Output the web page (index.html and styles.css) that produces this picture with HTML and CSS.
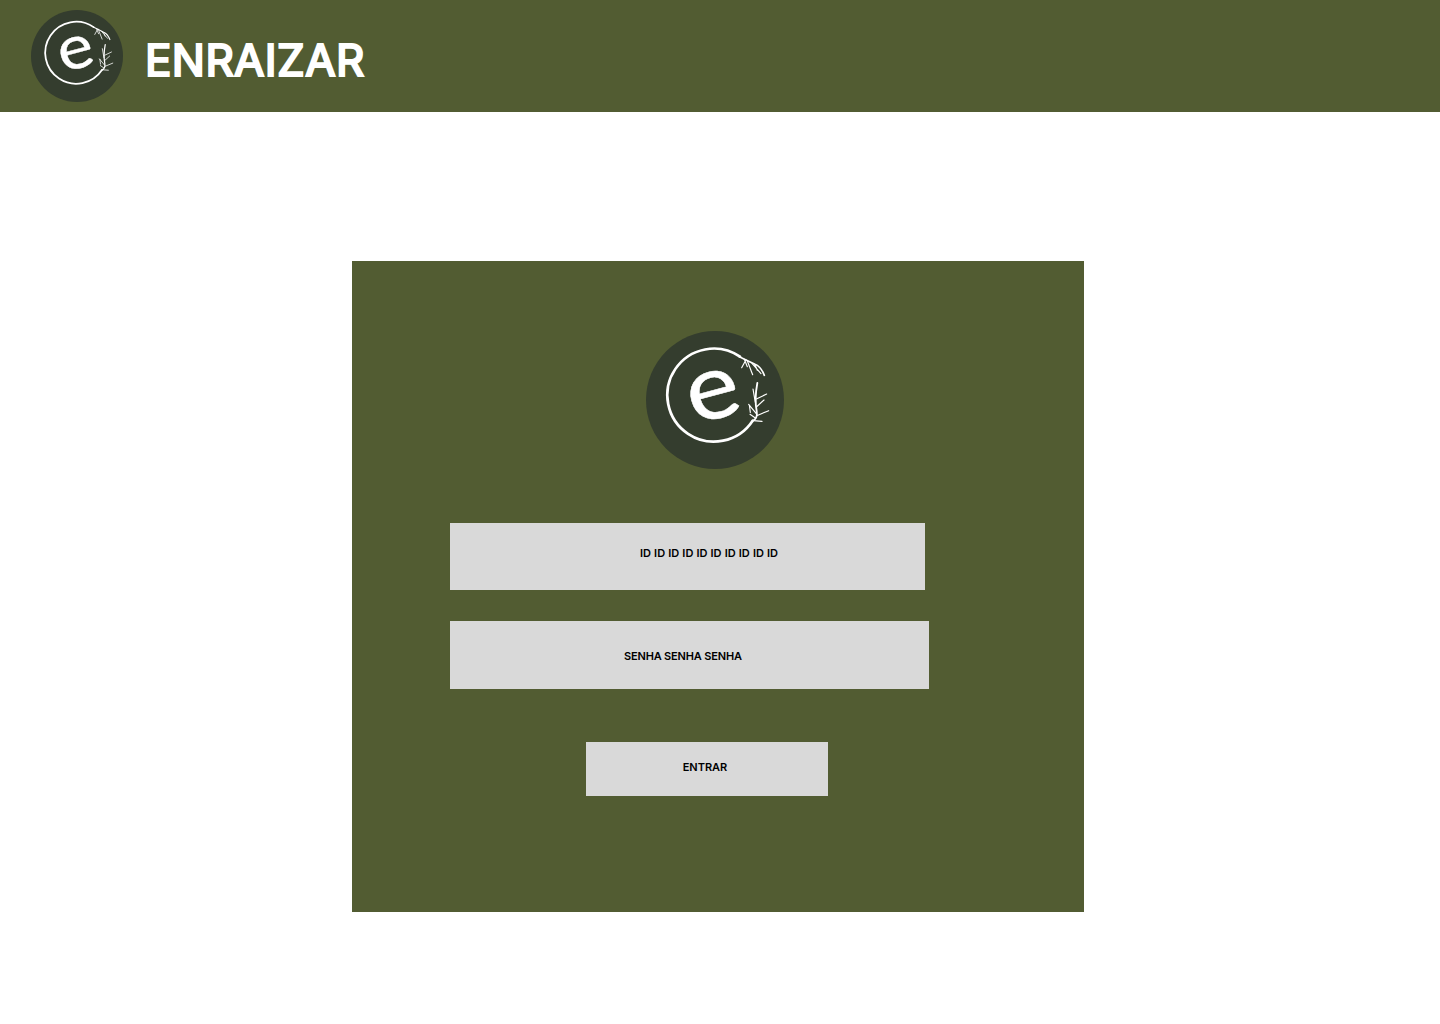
FILE: index.html
```html
<!DOCTYPE html>
<html lang="pt-BR">
<head>
<meta charset="utf-8">
<title>Enraizar</title>
<link rel="stylesheet" href="styles.css">
</head>
<body>
<header class="topbar">
  <svg class="logo logo-small" viewBox="18 18 414 414">
    <circle cx="225" cy="225" r="207" fill="#343d2e"/>
    <path d="M300 95A139.500 139.500 0 1 0 338 287" fill="none" stroke="#fff" stroke-width="8" stroke-linecap="round"/>
    <text transform="translate(161 299) rotate(-15) scale(1.1 1)" class="logo-e">e</text>
    <g fill="none" stroke="#fff" stroke-linecap="round" stroke-linejoin="round">
      <path stroke-width="5" d="M298 95Q325 108 345 118Q362 124 373 151"/>
      <path stroke-width="3.500" d="M318 104L305 128M322 108L338 149M336 115L363 146M345 119L352 136M313 103L322 125"/>
      <path stroke-width="5.500" d="M336 289Q354 282 350 258Q343 222 352 174"/>
      <path stroke-width="3.500" d="M349 266L326 238M346 232L339 192M349 222L380 207M350 272L386 257M340 287L366 289M349 246L372 225M328 240L331 262M345 278L330 268"/>
    </g>
  </svg>
  <span class="brand">ENRAIZAR</span>
</header>
<main class="page">
  <form class="card">
    <svg class="logo logo-large" viewBox="18 18 414 414">
      <circle cx="225" cy="225" r="207" fill="#343d2e"/>
      <path d="M300 95A139.500 139.500 0 1 0 338 287" fill="none" stroke="#fff" stroke-width="8" stroke-linecap="round"/>
      <text transform="translate(161 299) rotate(-15) scale(1.1 1)" class="logo-e">e</text>
      <g fill="none" stroke="#fff" stroke-linecap="round" stroke-linejoin="round">
        <path stroke-width="5" d="M298 95Q325 108 345 118Q362 124 373 151"/>
        <path stroke-width="3.500" d="M318 104L305 128M322 108L338 149M336 115L363 146M345 119L352 136M313 103L322 125"/>
        <path stroke-width="5.500" d="M336 289Q354 282 350 258Q343 222 352 174"/>
        <path stroke-width="3.500" d="M349 266L326 238M346 232L339 192M349 222L380 207M350 272L386 257M340 287L366 289M349 246L372 225M328 240L331 262M345 278L330 268"/>
      </g>
    </svg>
    <input class="field field-id" type="text" placeholder="ID ID ID ID ID ID ID ID ID ID" aria-label="ID">
    <input class="field field-pass" type="password" placeholder="SENHA SENHA SENHA" aria-label="Senha">
    <button class="submit" type="button">ENTRAR</button>
  </form>
</main>
</body>
</html>
```
FILE: styles.css
```css
* { box-sizing: border-box; }
html, body { margin: 0; background: #fff; }
body { font-family: "Inter", "Open Sans", sans-serif; }
.logo-e { font-family: "Lato", sans-serif; font-size: 275px; font-weight: 400; fill: #fff; stroke: #fff; stroke-width: 1.5px; }

.topbar {
  height: 112px;
  background: #525c32;
  display: flex;
  align-items: center;
  padding-left: 31px;
  gap: 22px;
}
.logo { display: block; flex: none; overflow: visible; }
.logo-small { width: 92px; height: 92px; }
.brand {
  font-family: "Inter", sans-serif;
  font-size: 44px;
  font-weight: 400;
  letter-spacing: 0.4px;
  color: #fff;
  line-height: 1;
  -webkit-text-stroke: 2.2px #fff;
  margin-top: 8px;
}

.page { padding: 149px 0 112px 352px; }
.card {
  width: 732px;
  height: 651px;
  background: #525c32;
  padding: 70px 0 0 98px;
  display: flex;
  flex-direction: column;
  align-items: flex-start;
}
.logo-large { width: 138px; height: 138px; margin: 0 0 54px 196px; }

.field, .submit {
  border: 0;
  border-radius: 0;
  background: #d9d9d9;
  color: #000;
  font-family: "Inter", sans-serif;
  font-size: 11px;
  font-weight: 600;
  outline: 0;
  display: block;
}
.field::placeholder { color: #000; opacity: 1; }
.field-id {
  width: 474.5px;
  height: 67px;
  padding: 0 0 7px 190px;
  margin-bottom: 31px;
  word-spacing: 0.35px;
}
.field-pass {
  width: 478.5px;
  height: 68px;
  padding: 2px 0 0 174px;
  margin-bottom: 53px;
  letter-spacing: -0.17px;
}
.submit {
  width: 242px;
  height: 54px;
  margin-left: 136px;
  padding: 0 0 4px 0;
  text-indent: -4px;
}
```
